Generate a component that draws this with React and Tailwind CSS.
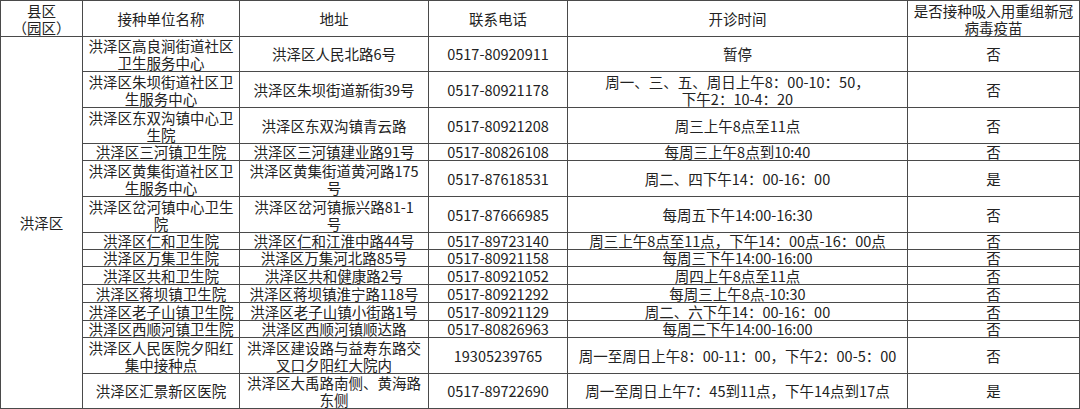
import React from "react";

const rows = [
  { name: ["洪泽区高良涧街道社区", "卫生服务中心"], addr: ["洪泽区人民北路6号"], tel: "0517-80920911", time: ["暂停"], vac: "否", h: "h-[35px]" },
  { name: ["洪泽区朱坝街道社区卫", "生服务中心"], addr: ["洪泽区朱坝街道新街39号"], tel: "0517-80921178", time: ["周一、三、五、周日上午8：00-10：50，", "下午2：10-4：20"], vac: "否", h: "h-[36px]" },
  { name: ["洪泽区东双沟镇中心卫", "生院"], addr: ["洪泽区东双沟镇青云路"], tel: "0517-80921208", time: ["周三上午8点至11点"], vac: "否", h: "h-[36px]" },
  { name: ["洪泽区三河镇卫生院"], addr: ["洪泽区三河镇建业路91号"], tel: "0517-80826108", time: ["每周三上午8点到10:40"], vac: "否", h: "h-[17px]" },
  { name: ["洪泽区黄集街道社区卫", "生服务中心"], addr: ["洪泽区黄集街道黄河路175", "号"], tel: "0517-87618531", time: ["周二、四下午14：00-16：00"], vac: "是", h: "h-[36px]" },
  { name: ["洪泽区岔河镇中心卫生", "院"], addr: ["洪泽区岔河镇振兴路81-1", "号"], tel: "0517-87666985", time: ["每周五下午14:00-16:30"], vac: "否", h: "h-[36px]" },
  { name: ["洪泽区仁和卫生院"], addr: ["洪泽区仁和江淮中路44号"], tel: "0517-89723140", time: ["周三上午8点至11点，下午14：00点-16：00点"], vac: "否", h: "h-[17px]" },
  { name: ["洪泽区万集卫生院"], addr: ["洪泽区万集河北路85号"], tel: "0517-80921158", time: ["每周三下午14:00-16:00"], vac: "否", h: "h-[17px]" },
  { name: ["洪泽区共和卫生院"], addr: ["洪泽区共和健康路2号"], tel: "0517-80921052", time: ["周四上午8点至11点"], vac: "否", h: "h-[18px]" },
  { name: ["洪泽区蒋坝镇卫生院"], addr: ["洪泽区蒋坝镇淮宁路118号"], tel: "0517-80921292", time: ["每周三上午8点-10:30"], vac: "否", h: "h-[18px]" },
  { name: ["洪泽区老子山镇卫生院"], addr: ["洪泽区老子山镇小街路1号"], tel: "0517-80921129", time: ["周二、六下午14：00-16：00"], vac: "否", h: "h-[18px]" },
  { name: ["洪泽区西顺河镇卫生院"], addr: ["洪泽区西顺河镇顺达路"], tel: "0517-80826963", time: ["每周二下午14:00-16:00"], vac: "否", h: "h-[17px]" },
  { name: ["洪泽区人民医院夕阳红", "集中接种点"], addr: ["洪泽区建设路与益寿东路交", "叉口夕阳红大院内"], tel: "19305239765", time: ["周一至周日上午8：00-11：00，下午2：00-5：00"], vac: "否", h: "h-[36px]" },
  { name: ["洪泽区汇景新区医院"], addr: ["洪泽区大禹路南侧、黄海路", "东侧"], tel: "0517-89722690", time: ["周一至周日上午7：45到11点，下午14点到17点"], vac: "是", h: "h-[35px]" },
];

const cell = "border border-[#4a4a4a] p-0 text-center align-middle";

function Lines({ items }) {
  return items.map((t, i) => (
    <div key={i} className={items.length > 1 ? "whitespace-nowrap leading-[17px]" : "whitespace-nowrap leading-[16px]"}>
      {t}
    </div>
  ));
}

export default function App() {
  return (
    <div className="w-[1080px] h-[409px] bg-white overflow-hidden text-[#222] text-[14.5px] font-['Noto_Sans_CJK_SC',sans-serif]">
      <table className="table-fixed border-collapse w-[1079px]">
        <colgroup>
          <col className="w-[82px]" />
          <col className="w-[157px]" />
          <col className="w-[189px]" />
          <col className="w-[139px]" />
          <col className="w-[340px]" />
          <col className="w-[172px]" />
        </colgroup>
        <thead>
          <tr className="h-[36px]">
            <th className={cell + " font-normal"}>
              <Lines items={["县区", "（园区）"]} />
            </th>
            <th className={cell + " font-normal"}>
              <Lines items={["接种单位名称"]} />
            </th>
            <th className={cell + " font-normal"}>
              <Lines items={["地址"]} />
            </th>
            <th className={cell + " font-normal"}>
              <Lines items={["联系电话"]} />
            </th>
            <th className={cell + " font-normal"}>
              <Lines items={["开诊时间"]} />
            </th>
            <th className={cell + " font-normal"}>
              <Lines items={["是否接种吸入用重组新冠", "病毒疫苗"]} />
            </th>
          </tr>
        </thead>
        <tbody>
          {rows.map((r, i) => (
            <tr key={i} className={r.h}>
              {i === 0 && (
                <td rowSpan={rows.length} className={cell}>
                  洪泽区
                </td>
              )}
              <td className={cell}>
                <Lines items={r.name} />
              </td>
              <td className={cell}>
                <Lines items={r.addr} />
              </td>
              <td className={cell}>
                <Lines items={[r.tel]} />
              </td>
              <td className={cell}>
                <Lines items={r.time} />
              </td>
              <td className={cell}>
                <Lines items={[r.vac]} />
              </td>
            </tr>
          ))}
        </tbody>
      </table>
    </div>
  );
}
